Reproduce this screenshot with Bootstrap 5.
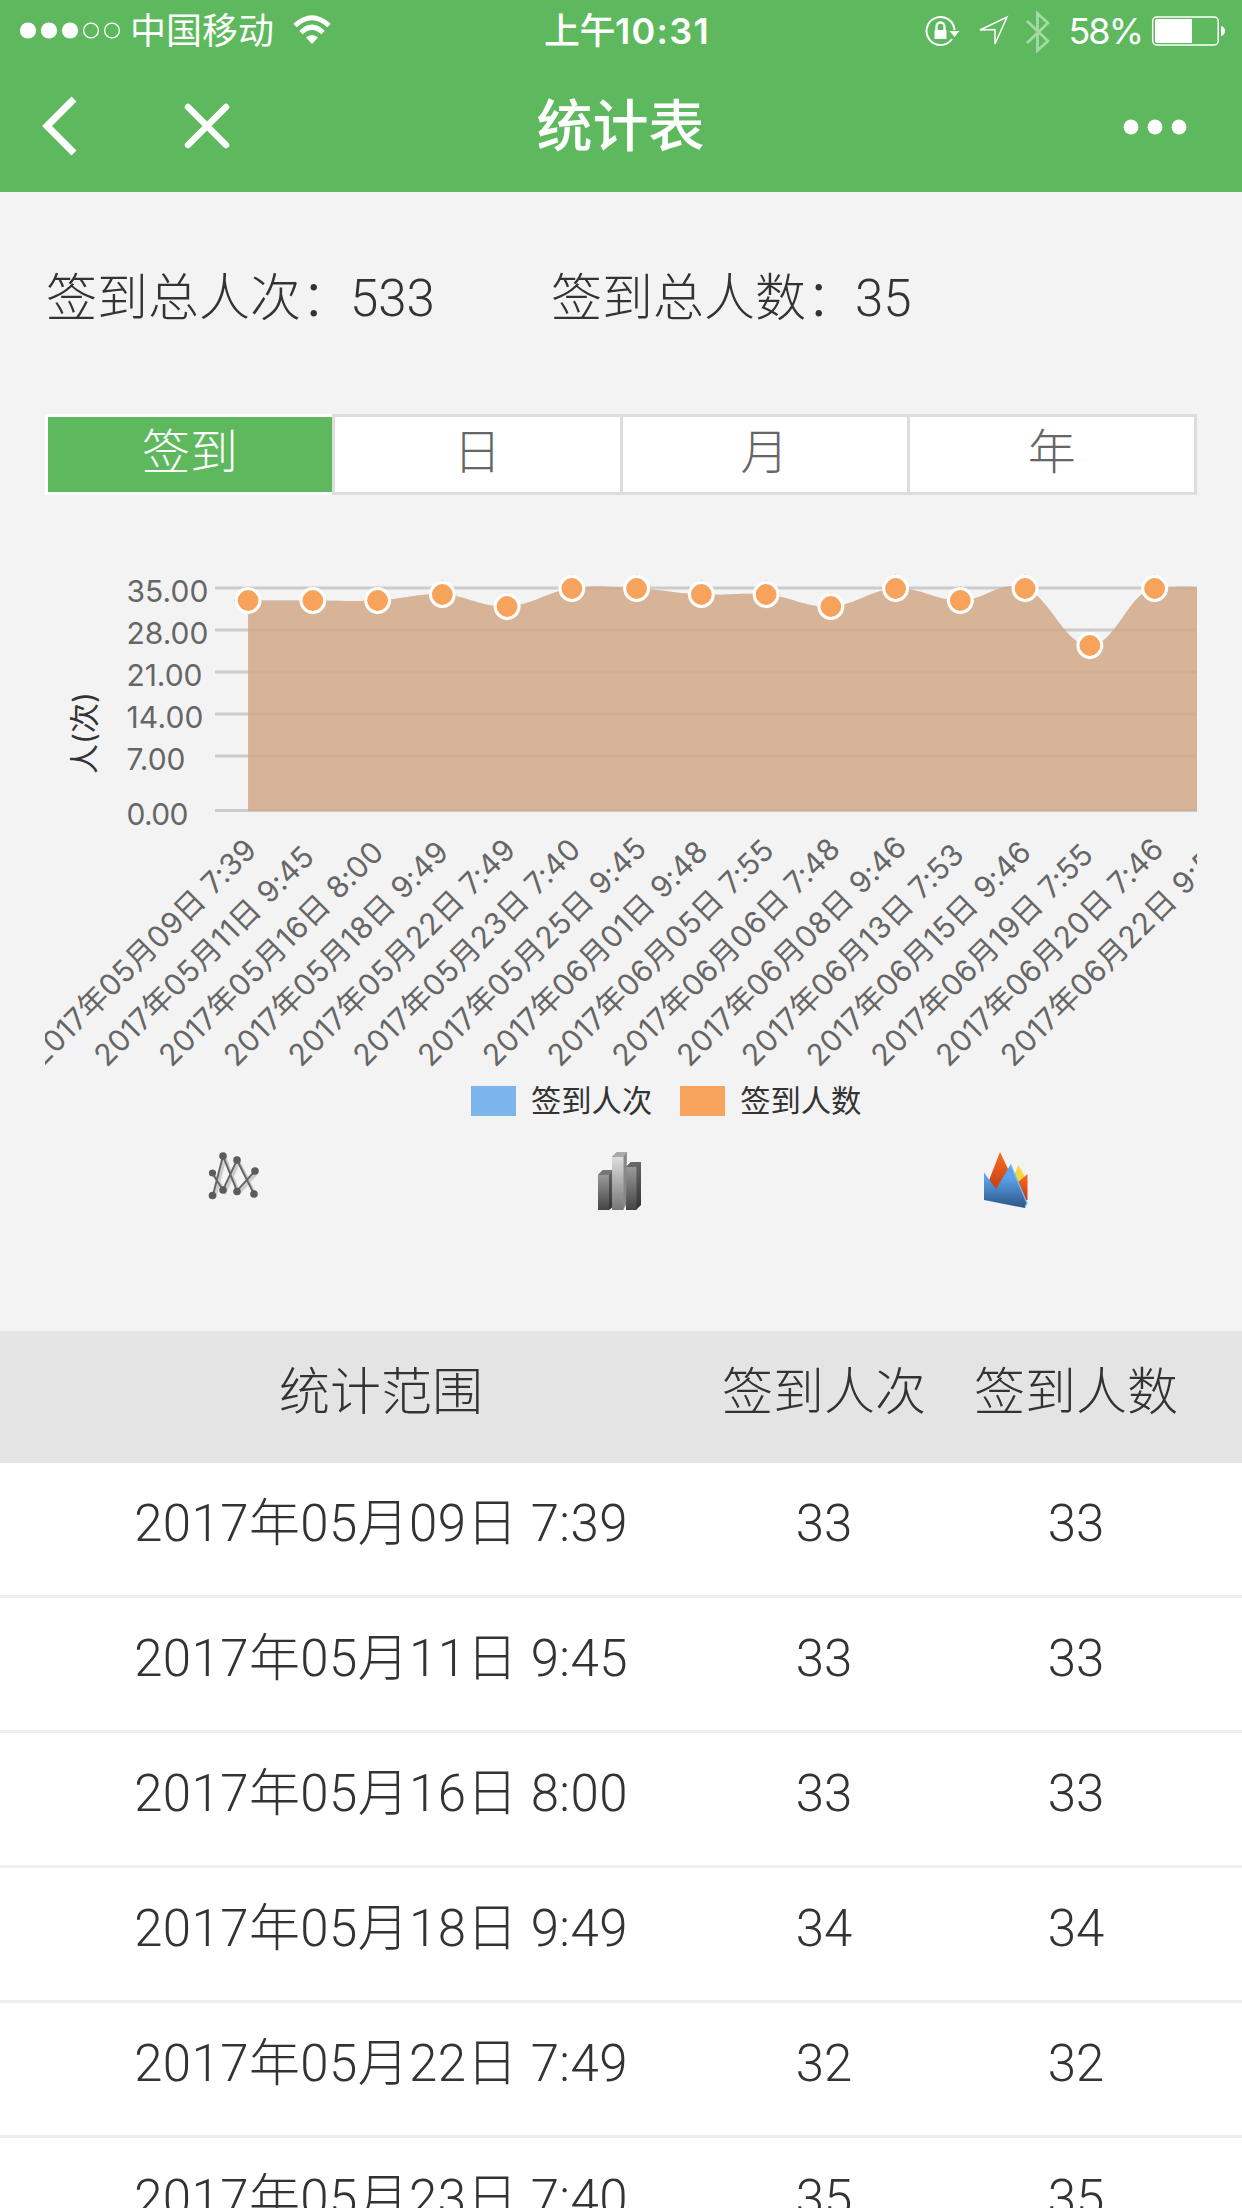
<!DOCTYPE html>
<html lang="zh-CN">
<head>
<meta charset="utf-8">
<meta name="viewport" content="width=device-width, initial-scale=1">
<title>统计表</title>
<link href="https://cdn.jsdelivr.net/npm/bootstrap@5.3.0/dist/css/bootstrap.min.css" rel="stylesheet">
<style>
body{background:#f3f3f3;color:#333;font-family:Roboto,"Noto Sans CJK SC",sans-serif;font-weight:300;font-size:51px;height:2208px;overflow:hidden}
svg{display:block;flex:none}
.topbar{background:#5eb95e;height:192px}
.status{height:62px;padding:0 16px 0 19px;font-family:Inter,"Noto Sans CJK SC",sans-serif;font-size:36px;line-height:62px;font-weight:400}
.status .side{width:500px}
.clock{font-size:36px;font-weight:600;letter-spacing:1.3px;padding-left:9px}
.clock-cn{font-weight:500;letter-spacing:-.5px}
.bat-label{width:92px;letter-spacing:-2px}
.titlebar{height:130px;padding:0 55px 0 42px}
.titlebar .side{width:240px}
.titlebar .side-end{width:228px}
.page-title{font-size:56px;font-weight:500;line-height:132px}
.summary{height:222px;padding:69px 46px 0;line-height:76px}
.summary .total{width:505px}
.figure-num{margin-left:-2px}
.tabs{margin:0 45px;height:81px;background:#ddd;padding:3px 3px 3px 0;gap:3px}
.tabs .seg{flex:1 1 0;min-width:0;background:#fff;color:#666;font-size:48px;line-height:71px;text-align:center}
.tabs .seg.on{background:#5eb95e;color:#fff;box-shadow:0 -3px #fff,0 3px #fff,inset 3px 0 #fff;padding-left:3px}
.chart{margin:0 45px;height:575px}
.chart text{font-family:Inter,"Noto Sans CJK SC",sans-serif;font-weight:400;font-size:30px;fill:#666}
.legend{height:62px;padding-left:471px;font-size:30.3px;line-height:46px;margin:0;font-weight:400}
.legend-name{margin-left:15px;padding-top:2px}
.swatch{width:45px;height:30px}
.swatch-next{margin-left:28px}
.kinds{height:199px}
.range{margin:0;table-layout:fixed;width:1242px;border-collapse:separate;border-spacing:0}
.range th,.range td{font-weight:300;text-align:center;vertical-align:middle;padding:0;white-space:nowrap;border:0;color:#333;box-shadow:none}
.range thead th{background:#e4e4e4;height:132px;padding-bottom:8px}
.range tbody td{background:#fff;height:135px;border-bottom:3px solid #eee;padding-bottom:9px}
.range tbody td:first-child{letter-spacing:.4px}
.range tr>:first-child{padding-left:64px}
.range tr>:last-child{padding-right:40px}
</style>
<script src="https://cdn.jsdelivr.net/npm/bootstrap@5.3.0/dist/js/bootstrap.bundle.min.js"></script>
</head>
<body>
<header class="topbar text-white">
  <div class="status d-flex align-items-center justify-content-between">
    <div class="side d-flex align-items-center">
      <svg width="103" height="20" viewBox="0 0 103 20" fill="#fff"><circle cx="9" cy="9.500" r="8.100"/><circle cx="30" cy="9.500" r="8.100"/><circle cx="51" cy="9.500" r="8.100"/><g fill="none" stroke="#fff" stroke-width="1.300"><circle cx="72" cy="9.500" r="7.400"/><circle cx="93" cy="9.500" r="7.400"/></g></svg>
      <span class="ms-2">中国移动</span>
      <svg class="ms-3" width="42" height="32" viewBox="-1 0 42 32" fill="none" stroke="#fff" stroke-width="5"><path d="M4 10.500Q21-5 38 10.500M10 17.500Q21 7 32 17.500"/><path d="M15 22.500Q21 17.500 27 22.500L21 29Z" fill="#fff" stroke="none"/></svg>
    </div>
    <div class="clock"><span class="clock-cn">上午</span>10:31</div>
    <div class="side d-flex align-items-center justify-content-end">
      <svg width="125" height="44" viewBox="0 0 125 44" fill="none" stroke="#fff">
        <path d="M27 30A14 14 0 1 1 29.500 21" stroke-width="2"/><path d="M24.500 22H34.500L29.500 28Z" fill="#fff" stroke="none"/>
        <rect x="9.500" y="21" width="12" height="9" fill="#fff" stroke="none"/><path d="M11.500 22V17.500a4 4 0 0 1 8 0V22" stroke-width="2.300"/>
        <path d="M55 21L82 8L70 35V20.500Z" stroke-width="1.500"/>
        <path d="M102 12L123 32L112.500 41.500V4.500L123 14L102 34" stroke-width="2.800" opacity=".45"/>
      </svg>
      <span class="bat-label text-end">58%</span>
      <svg class="ms-2" width="76" height="32" viewBox="0 0 76 32"><rect x="2.700" y="2" width="65.500" height="28" rx="4" fill="none" stroke="#fff" stroke-width="1.500"/><path d="M7 4H42V28H7Q5 28 5 26V6Q5 4 7 4Z" fill="#fff"/><path d="M71 11Q75 12 75 16T71 21Z" fill="#fff"/></svg>
    </div>
  </div>
  <div class="titlebar d-flex align-items-center justify-content-between">
    <div class="side d-flex align-items-center">
      <svg width="190" height="62" viewBox="0 0 190 62" fill="none" stroke="#fff" stroke-width="7"><path d="M32 3L5 30L32 57"/><path d="M146 11L184 49M184 11L146 49" stroke-linecap="round" stroke-width="6.500"/></svg>
    </div>
    <div class="page-title">统计表</div>
    <div class="side-end d-flex justify-content-end">
      <svg width="64" height="16" viewBox="0 0 64 16" fill="#fff"><circle cx="8" cy="8" r="7.500"/><circle cx="32" cy="8" r="7.500"/><circle cx="56" cy="8" r="7.500"/></svg>
    </div>
  </div>
</header>

<section class="summary d-flex">
  <div class="total">签到总人次：<span class="figure-num">533</span></div>
  <div>签到总人数：<span class="figure-num">35</span></div>
</section>

<nav class="tabs d-flex">
  <div class="seg on">签到</div><div class="seg">日</div><div class="seg">月</div><div class="seg">年</div>
</nav>

<section class="chart">
  <svg id="plot" width="1152" height="590" viewBox="45 495 1152 590"></svg>
</section>

<div class="legend d-flex align-items-center">
  <span class="swatch" style="background:#7cb5ec"></span><span class="legend-name">签到人次</span>
  <span class="swatch swatch-next" style="background:#f7a35c"></span><span class="legend-name">签到人数</span>
</div>

<div class="kinds">
  <svg width="1242" height="94" viewBox="0 1132 1242 94">
    <defs>
      <linearGradient id="g1" x2="0" y2="1"><stop stop-color="#999"/><stop offset="1" stop-color="#444"/></linearGradient>
      <linearGradient id="g2" x2="0" y2="1"><stop stop-color="#ddd"/><stop offset="1" stop-color="#777"/></linearGradient>
      <linearGradient id="g3" x2="0" y2="1"><stop stop-color="#666"/><stop offset="1" stop-color="#333"/></linearGradient>
      <linearGradient id="g4" x2="0" y2="1"><stop offset=".3" stop-color="#5aa2ec"/><stop offset="1" stop-color="#2c5585"/></linearGradient>
      <linearGradient id="g5" x2="0" y2="1"><stop stop-color="#ff6a22"/><stop offset="1" stop-color="#c03c10"/></linearGradient>
    </defs>
    <g fill="none" stroke="#ccc" stroke-width="3"><path d="M215 1197L225 1158L239 1193L256 1174M215 1176L225 1192L239 1162L256 1196"/></g>
    <g fill="none" stroke="#666" stroke-width="2"><path d="M213 1195L223 1156L237 1191L255 1171M212 1173L223 1190L237 1160L254 1194"/></g>
    <g fill="#5c5c5c"><circle cx="223" cy="1156" r="3.800"/><circle cx="237" cy="1160" r="3.800"/><circle cx="212.500" cy="1173" r="3.600"/><circle cx="255" cy="1171" r="3.800"/><circle cx="223" cy="1190" r="3.800"/><circle cx="237" cy="1191.500" r="3.800"/><circle cx="254" cy="1194" r="3.800"/><circle cx="212.500" cy="1195.500" r="3.800"/></g>
    <path d="M598 1175L603 1170H614V1206L609 1210Z" fill="url(#g3)"/><rect x="598" y="1175" width="11" height="35" fill="url(#g1)"/><path d="M598 1175L603 1170H613L609 1175Z" fill="#777"/>
    <path d="M626 1167L631 1162H641V1205L636 1210Z" fill="url(#g3)"/><rect x="626" y="1167" width="10.500" height="43" fill="url(#g1)"/><path d="M626 1167L631 1162H641L636.500 1167Z" fill="#666"/>
    <path d="M612 1157L617 1152H627L626 1205L623 1210Z" fill="#888"/><rect x="612" y="1157" width="11.500" height="53" fill="url(#g2)"/><path d="M612 1157L617 1152H627L623.500 1157Z" fill="#aaa"/>
    <path d="M1013 1178L1018.500 1165L1024 1175V1185H1013Z" fill="#f5d83a"/><path d="M988 1183L1000 1152L1009 1171V1192H992Z" fill="url(#g5)"/><path d="M1018 1182L1027.500 1174V1200H1022Z" fill="url(#g5)"/>
    <path d="M984 1172.500L996 1189L1010.500 1164.500L1027 1203L1025 1208L984 1200Z" fill="url(#g4)"/><path d="M1010.500 1164.500L1027 1203L1025 1207" fill="none" stroke="#79b7f4" stroke-width="1.300"/>
  </svg>
</div>

<table class="table range">
  <colgroup><col style="width:698px"><col style="width:252px"><col></colgroup>
  <thead><tr><th>统计范围</th><th>签到人次</th><th>签到人数</th></tr></thead>
  <tbody id="rows"></tbody>
</table>

<script>
const data=[['05月09日 7:39',33],['05月11日 9:45',33],['05月16日 8:00',33],['05月18日 9:49',34],['05月22日 7:49',32],['05月23日 7:40',35],['05月25日 9:45',35],['06月01日 9:48',34],['06月05日 7:55',34],['06月06日 7:48',32],['06月08日 9:46',35],['06月13日 7:53',33],['06月15日 9:46',35],['06月19日 7:55',25.5],['06月20日 7:46',35],['06月22日 9:55',35]];
document.getElementById('rows').innerHTML=data.slice(0,6).map(([d,n])=>`<tr><td>2017年${d}</td><td>${n}</td><td>${n}</td></tr>`).join('');
const step=64.75,X=i=>248.1+i*step,Y=v=>588.5+(35-v)*6;
let s='';
[['35.00',588,82],['28.00',630,82],['21.00',672,76],['14.00',714,77],['7.00',756,59],['0.00',810.5,62]].forEach(([t,y,w])=>{
  s+=`<path d="M215 ${y}H1197" stroke="#ccc" stroke-width="3"/><text x="126.500" y="${y+14}" textLength="${w}">${t}</text>`;
});
// Cubic smoothing through the points, with tangents parallel to the neighbours
const p=data.map(([,v],i)=>[X(i),Y(v)]);
const m=p.map((_,i)=>i===0?0:i===p.length-1?.08:(p[i+1][1]-p[i-1][1])/(2*step));
m[14]=-.1;
let d=`M${p[0][0]} 811V${p[0][1]}`;
for(let i=1;i<p.length;i++){const h=step*.4;d+=`C${p[i-1][0]+h} ${p[i-1][1]+m[i-1]*h} ${p[i][0]-h} ${p[i][1]-m[i]*h} ${p[i][0]} ${p[i][1]}`;}
d+='V811Z';
s+=`<path d="${d}" fill="#7cb5ec" opacity=".64"/><path d="${d}" fill="#f7a35c" opacity=".6"/>`;
p.forEach(([x,y],i)=>{
  if(i<15)s+=`<path d="M${x-14.5} ${y}L${x} ${y-14.5}L${x+14.5} ${y}L${x} ${y+14.5}Z" fill="#f9c18f"/><circle cx="${x}" cy="${y}" r="11.9" fill="#f7a35c" stroke="#fff" stroke-width="3"/>`;
  s+=`<text transform="translate(${42+i*step} 1068) rotate(-45)" letter-spacing=".3">2017年${data[i][0]}</text>`;
});
s+=`<text transform="translate(95 774) rotate(-90)" style="fill:#333">人(次)</text>`;
document.getElementById('plot').innerHTML=s;
</script>
</body>
</html>
